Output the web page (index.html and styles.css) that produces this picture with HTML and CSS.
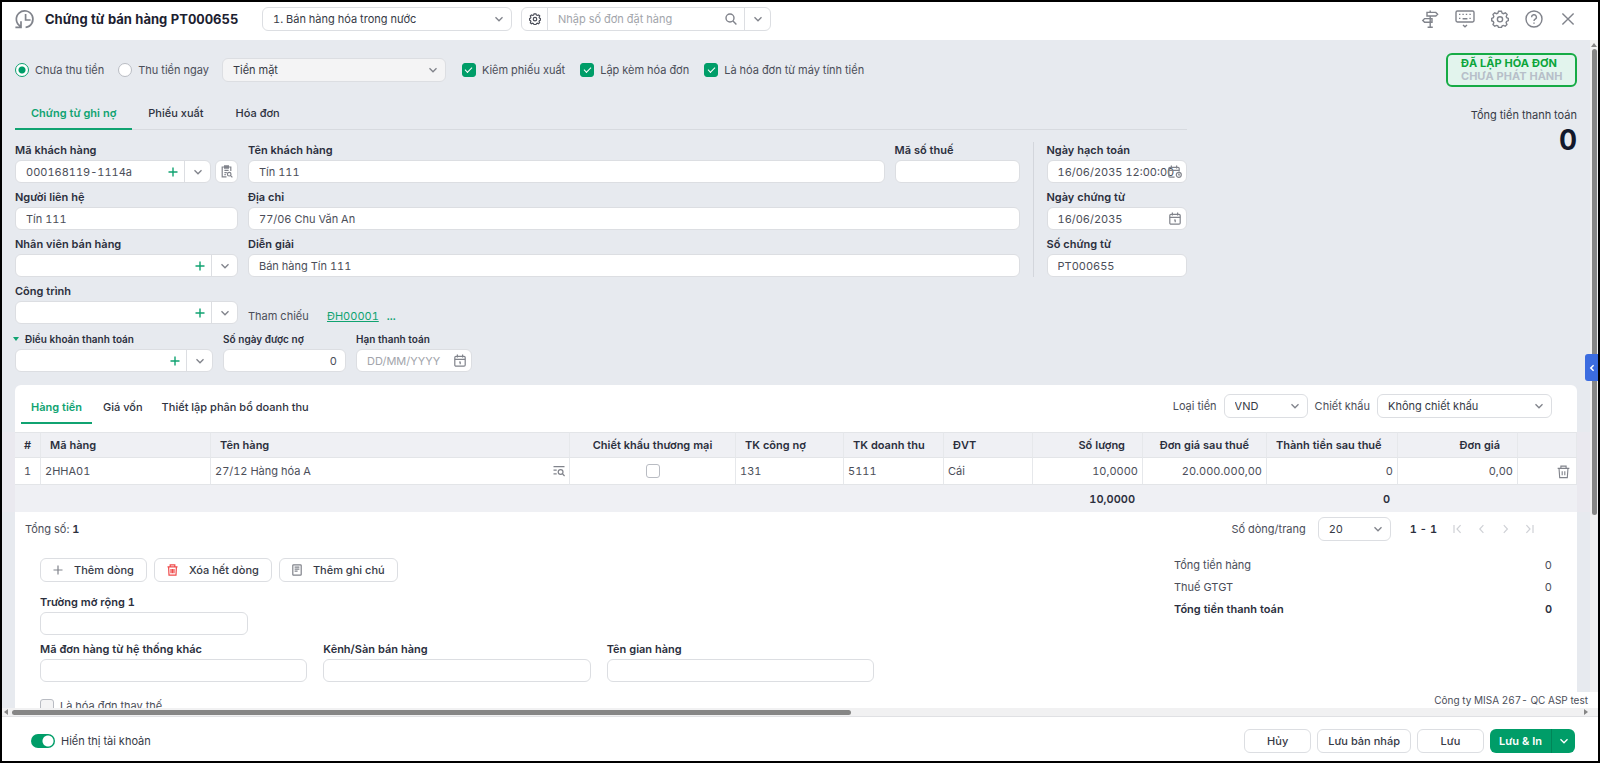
FILE: index.html
```html
<!DOCTYPE html>
<html lang="vi">
<head>
    <meta charset="UTF-8">
    <meta name="viewport" content="width=device-width, initial-scale=1.0">
    <title>Chứng từ bán hàng PT000655</title>
    <link rel="stylesheet" href="styles.css">
</head>
<body>
    <!-- Icon dùng chung -->
    <svg class="sprite" aria-hidden="true">
        <symbol id="i-down" viewBox="0 0 10 10"><path d="M1.5 3.2 5 6.8l3.5-3.6"/></symbol>
        <symbol id="i-plus" viewBox="0 0 10 10"><path d="M5 .5v9M.5 5h9"/></symbol>
        <symbol id="i-gear" viewBox="0 0 18 18"><path d="M7.6 1.2h2.8l.8 2 1.2.5 2-.9 1.7 1.7-.9 2 .5 1.2 1.6.7v2.2l-1.7.8-.5 1.2.8 1.9-1.7 1.7-1.8-.8-1.2.5-.8 1.6H7.6l-.8-1.6-1.2-.5-1.9.8L2 14.6l.8-1.9-.5-1.2-1.6-.8V8.4l1.6-.7.5-1.2-.8-2 1.7-1.7 1.9.9 1.2-.5z"/><circle cx="9" cy="9.3" r="2.6"/></symbol>
        <symbol id="i-cal" viewBox="0 0 12 13"><rect x=".8" y="2.3" width="10.4" height="9.9" rx="1.2"/><path d="M.8 5.3h10.4M3.4.4v3M8.6.4v3M5 8h1.2v2.3"/></symbol>
        <symbol id="i-trash" viewBox="0 0 14 15"><path d="M.7 3.6h12.6M4.2 3.4V1.2h5.6v2.2M2.2 3.8l.7 9.8h8.2l.7-9.8M5.6 6.6v4.4M8.4 6.6v4.4"/></symbol>
    </svg>

    <div class="app">
        <header class="header">
            <svg class="icon history" viewBox="0 0 20 20"><path d="M5.6 17.4a8.3 8.3 0 1 1 5 1M6 12.2V18.4H.4M10.6 5v6h5"/></svg>
            <h1>Chứng từ bán hàng PT000655</h1>
            <div class="select select-type">
                <select aria-label="Loại chứng từ"><option>1. Bán hàng hóa trong nước</option></select>
                <svg class="icon chev"><use href="#i-down"/></svg>
            </div>
            <div class="combo order-search">
                <button class="combo-btn" aria-label="Thiết lập tìm kiếm"><svg class="icon gear-sm"><use href="#i-gear"/></svg></button>
                <input type="text" aria-label="Số đơn đặt hàng" placeholder="Nhập số đơn đặt hàng">
                <svg class="icon lens" viewBox="0 0 12 12"><circle cx="5" cy="5" r="4"/><path d="M8 8l3.4 3.4"/></svg>
                <button class="combo-btn" aria-label="Mở danh sách"><svg class="icon chev-s"><use href="#i-down"/></svg></button>
            </div>
            <div class="header-tools">
                <button aria-label="Hướng dẫn"><svg class="icon tool" viewBox="0 0 18 18"><path d="M9.2.6v1.8M6 2.4h8.8l1.8 1.8L14.8 6H6zM9.2 6v11M11 8.6H3.6L1.8 10.4l1.8 1.8H11zM6.6 17.2h5.2"/></svg></button>
                <button aria-label="Phím tắt"><svg class="icon tool wide" viewBox="0 0 20 18"><rect x="1" y="1" width="18" height="11" rx="1.4"/><path d="M4 4.4h1.4M7.4 4.4h1.4M10.8 4.4h1.4M14.4 4.4h1.4M4 8.4h1.4M7.6 8.8h4.8M14.4 8.4h1.4M8 15l2 1.8 2-1.8"/></svg></button>
                <button aria-label="Thiết lập"><svg class="icon tool"><use href="#i-gear"/></svg></button>
                <button aria-label="Trợ giúp"><svg class="icon tool" viewBox="0 0 18 18"><circle cx="9" cy="9" r="8"/><path d="M6.6 7.2a2.4 2.4 0 1 1 3.6 2c-.8.5-1.2.9-1.2 1.8M9 12.6v1.2"/></svg></button>
                <button aria-label="Đóng"><svg class="icon tool" viewBox="0 0 18 18"><path d="M3.4 3.4l11.2 11.2M14.6 3.4L3.4 14.6"/></svg></button>
            </div>
        </header>

        <div class="workspace">
            <main class="content">
                <section class="top">
                    <div class="form-panel">
                        <div class="options">
                            <label class="radio"><input type="radio" name="pay" checked>Chưa thu tiền</label>
                            <label class="radio"><input type="radio" name="pay">Thu tiền ngay</label>
                            <div class="select select-pay">
                                <select aria-label="Phương thức thanh toán"><option>Tiền mặt</option></select>
                                <svg class="icon chev"><use href="#i-down"/></svg>
                            </div>
                            <label class="check"><input type="checkbox" checked>Kiêm phiếu xuất</label>
                            <label class="check"><input type="checkbox" checked>Lập kèm hóa đơn</label>
                            <label class="check"><input type="checkbox" checked>Là hóa đơn từ máy tính tiền</label>
                        </div>

                        <nav class="tabs">
                            <button class="tab active">Chứng từ ghi nợ</button>
                            <button class="tab">Phiếu xuất</button>
                            <button class="tab">Hóa đơn</button>
                        </nav>

                        <div class="form-body">
                            <div class="fields">
                                <div class="field">
                                    <label for="customerCode">Mã khách hàng</label>
                                    <div class="with-button">
                                        <div class="combo">
                                            <input type="text" id="customerCode" value="000168119-1114a">
                                            <button class="add" aria-label="Thêm khách hàng"><svg class="icon plus"><use href="#i-plus"/></svg></button>
                                            <button class="combo-btn" aria-label="Chọn khách hàng"><svg class="icon chev-s"><use href="#i-down"/></svg></button>
                                        </div>
                                        <button class="square" aria-label="Tra cứu khách hàng"><svg class="icon" width="12" height="13" viewBox="0 0 12 13"><path d="M5.5 11.8H1.2V2h8.6v4M3.6.8h3.8v2.4H3.6zM3.4 5.4h4.2M3.4 7.6h2.4M3.4 9.6h1.4"/><circle cx="8.2" cy="9.2" r="1.8"/><path d="M9.6 10.6l1.8 1.8"/></svg></button>
                                    </div>
                                </div>
                                <div class="field-row">
                                    <div class="field grow">
                                        <label for="customerName">Tên khách hàng</label>
                                        <input class="box" type="text" id="customerName" value="Tín 111">
                                    </div>
                                    <div class="field tax">
                                        <label for="taxCode">Mã số thuế</label>
                                        <input class="box" type="text" id="taxCode">
                                    </div>
                                </div>
                                <div class="field">
                                    <label for="contact">Người liên hệ</label>
                                    <input class="box" type="text" id="contact" value="Tín 111">
                                </div>
                                <div class="field">
                                    <label for="address">Địa chỉ</label>
                                    <input class="box" type="text" id="address" value="77/06 Chu Văn An">
                                </div>
                                <div class="field">
                                    <label for="seller">Nhân viên bán hàng</label>
                                    <div class="combo">
                                        <input type="text" id="seller">
                                        <button class="add" aria-label="Thêm nhân viên"><svg class="icon plus"><use href="#i-plus"/></svg></button>
                                        <button class="combo-btn" aria-label="Chọn nhân viên"><svg class="icon chev-s"><use href="#i-down"/></svg></button>
                                    </div>
                                </div>
                                <div class="field">
                                    <label for="note">Diễn giải</label>
                                    <input class="box" type="text" id="note" value="Bán hàng Tín 111">
                                </div>
                                <div class="field">
                                    <label for="project">Công trình</label>
                                    <div class="combo">
                                        <input type="text" id="project">
                                        <button class="add" aria-label="Thêm công trình"><svg class="icon plus"><use href="#i-plus"/></svg></button>
                                        <button class="combo-btn" aria-label="Chọn công trình"><svg class="icon chev-s"><use href="#i-down"/></svg></button>
                                    </div>
                                </div>
                                <div class="reference">
                                    <span>Tham chiếu</span>
                                    <a class="ref-link" href="#">ĐH00001</a>
                                    <a class="ref-more" href="#">...</a>
                                </div>
                            </div>
                            <div class="dates">
                                <div class="field">
                                    <label for="postDate">Ngày hạch toán</label>
                                    <div class="combo date">
                                        <input type="text" id="postDate" value="16/06/2035 12:00:00">
                                        <svg class="icon cal cal-time" viewBox="0 0 15 13"><path d="M6.6 12.2H2A1.2 1.2 0 0 1 .8 11V3.5A1.2 1.2 0 0 1 2 2.3h8a1.2 1.2 0 0 1 1.2 1.2v3M.8 5.3h10.4M3.4.4v3M8.6.4v3"/><circle cx="10.8" cy="9.8" r="2.5"/><path d="M10.8 8.6v1.4h1.2"/></svg>
                                    </div>
                                </div>
                                <div class="field">
                                    <label for="docDate">Ngày chứng từ</label>
                                    <div class="combo date">
                                        <input type="text" id="docDate" value="16/06/2035">
                                        <svg class="icon cal"><use href="#i-cal"/></svg>
                                    </div>
                                </div>
                                <div class="field">
                                    <label for="docNo">Số chứng từ</label>
                                    <input class="box" type="text" id="docNo" value="PT000655">
                                </div>
                            </div>
                        </div>

                        <div class="terms">
                            <div class="field term-code">
                                <label for="term"><svg class="caret" width="6" height="4" viewBox="0 0 6 4"><path d="M0 0h6L3 4z"/></svg>Điều khoản thanh toán</label>
                                <div class="combo">
                                    <input type="text" id="term">
                                    <button class="add" aria-label="Thêm điều khoản"><svg class="icon plus"><use href="#i-plus"/></svg></button>
                                    <button class="combo-btn" aria-label="Chọn điều khoản"><svg class="icon chev-s"><use href="#i-down"/></svg></button>
                                </div>
                            </div>
                            <div class="field term-days">
                                <label for="days">Số ngày được nợ</label>
                                <input class="box num" type="text" id="days" value="0">
                            </div>
                            <div class="field term-due">
                                <label for="due">Hạn thanh toán</label>
                                <div class="combo date">
                                    <input type="text" id="due" placeholder="DD/MM/YYYY">
                                    <svg class="icon cal"><use href="#i-cal"/></svg>
                                </div>
                            </div>
                        </div>
                    </div>

                    <aside class="status">
                        <div class="badge">
                            <div class="badge-done">ĐÃ LẬP HÓA ĐƠN</div>
                            <div class="badge-wait">CHƯA PHÁT HÀNH</div>
                        </div>
                        <div class="status-label">Tổng tiền thanh toán</div>
                        <div class="status-total">0</div>
                    </aside>
                </section>

                <section class="card">
                    <div class="card-bar">
                        <nav class="card-tabs">
                            <button class="tab active">Hàng tiền</button>
                            <button class="tab">Giá vốn</button>
                            <button class="tab">Thiết lập phân bổ doanh thu</button>
                        </nav>
                        <div class="card-filters">
                            <label for="currency">Loại tiền</label>
                            <div class="select select-currency">
                                <select id="currency"><option>VND</option></select>
                                <svg class="icon chev"><use href="#i-down"/></svg>
                            </div>
                            <label for="discount">Chiết khấu</label>
                            <div class="select select-discount">
                                <select id="discount"><option>Không chiết khấu</option></select>
                                <svg class="icon chev"><use href="#i-down"/></svg>
                            </div>
                        </div>
                    </div>

                    <div class="table-band">
                        <table>
                            <colgroup>
                                <col class="c-idx"><col class="c-code"><col><col class="c-disc"><col class="c-debt"><col class="c-rev"><col class="c-unit"><col class="c-qty"><col class="c-price"><col class="c-amount"><col class="c-base"><col class="c-act">
                            </colgroup>
                            <thead>
                                <tr>
                                    <th class="center">#</th>
                                    <th>Mã hàng</th>
                                    <th>Tên hàng</th>
                                    <th class="center">Chiết khấu thương mại</th>
                                    <th>TK công nợ</th>
                                    <th>TK doanh thu</th>
                                    <th>ĐVT</th>
                                    <th class="right">Số lượng</th>
                                    <th class="right">Đơn giá sau thuế</th>
                                    <th class="right">Thành tiền sau thuế</th>
                                    <th class="right">Đơn giá</th>
                                    <th></th>
                                </tr>
                            </thead>
                            <tbody>
                                <tr>
                                    <td class="center">1</td>
                                    <td>2HHA01</td>
                                    <td>
                                        <div class="name-cell">27/12 Hàng hóa A
                                            <svg class="icon" width="12" height="12" viewBox="0 0 12 12"><path d="M.5 1.6h11M.5 5.2h3.2M.5 8.8h3.2M9.6 9l2 2"/><circle cx="7.6" cy="7" r="2.4"/></svg>
                                        </div>
                                    </td>
                                    <td class="center"><input type="checkbox" aria-label="Chiết khấu thương mại"></td>
                                    <td>131</td>
                                    <td>5111</td>
                                    <td>Cái</td>
                                    <td class="right">10,0000</td>
                                    <td class="right">20.000.000,00</td>
                                    <td class="right">0</td>
                                    <td class="right">0,00</td>
                                    <td class="right"><button class="row-del" aria-label="Xóa dòng"><svg class="icon trash"><use href="#i-trash"/></svg></button></td>
                                </tr>
                            </tbody>
                            <tfoot>
                                <tr>
                                    <td colspan="7"></td>
                                    <td class="right">10,0000</td>
                                    <td></td>
                                    <td class="right">0</td>
                                    <td colspan="2"></td>
                                </tr>
                            </tfoot>
                        </table>
                    </div>

                    <div class="pager">
                        <span>Tổng số: <b>1</b></span>
                        <div class="pager-right">
                            <label for="pageSize">Số dòng/trang</label>
                            <div class="select select-page">
                                <select id="pageSize"><option>20</option></select>
                                <svg class="icon chev"><use href="#i-down"/></svg>
                            </div>
                            <b class="range">1 - 1</b>
                            <button aria-label="Trang đầu"><svg class="icon" width="9" height="10" viewBox="0 0 9 10"><path d="M1 1v8M7.6 1.2L4 5l3.6 3.8"/></svg></button>
                            <button aria-label="Trang trước"><svg class="icon" width="9" height="10" viewBox="0 0 9 10"><path d="M6.4 1.2L2.8 5l3.6 3.8"/></svg></button>
                            <button aria-label="Trang sau"><svg class="icon" width="9" height="10" viewBox="0 0 9 10"><path d="M2.8 1.2L6.4 5 2.8 8.8"/></svg></button>
                            <button aria-label="Trang cuối"><svg class="icon" width="9" height="10" viewBox="0 0 9 10"><path d="M8 1v8M1.4 1.2L5 5 1.4 8.8"/></svg></button>
                        </div>
                    </div>

                    <div class="lower">
                        <div class="lower-left">
                            <div class="actions">
                                <button class="btn"><svg class="icon" width="10" height="10"><use href="#i-plus"/></svg>Thêm dòng</button>
                                <button class="btn"><svg class="icon red" width="11" height="12" viewBox="0 0 11 12"><path d="M.5 2.8h10M3.2 2.6V.8h4.6v1.8M1.6 3l.4 8.2h7L9.4 3M4 5v4.2M5.5 5v4.2M7 5v4.2"/></svg>Xóa hết dòng</button>
                                <button class="btn"><svg class="icon" width="10" height="12" viewBox="0 0 10 12"><rect x=".8" y=".8" width="8.4" height="10.4" rx=".8"/><path d="M2.6 3.2h4.8M2.6 5.2h4.8M2.6 7.2h3"/></svg>Thêm ghi chú</button>
                            </div>
                            <div class="field ext-field">
                                <label for="ext1">Trường mở rộng 1</label>
                                <input class="box" type="text" id="ext1">
                            </div>
                            <div class="ext-row">
                                <div class="field">
                                    <label for="extOrder">Mã đơn hàng từ hệ thống khác</label>
                                    <input class="box" type="text" id="extOrder">
                                </div>
                                <div class="field">
                                    <label for="channel">Kênh/Sàn bán hàng</label>
                                    <input class="box" type="text" id="channel">
                                </div>
                                <div class="field">
                                    <label for="shop">Tên gian hàng</label>
                                    <input class="box" type="text" id="shop">
                                </div>
                            </div>
                            <label class="check replace"><input type="checkbox" disabled>Là hóa đơn thay thế</label>
                        </div>
                        <dl class="totals">
                            <div><dt>Tổng tiền hàng</dt><dd>0</dd></div>
                            <div><dt>Thuế GTGT</dt><dd>0</dd></div>
                            <div class="strong"><dt>Tổng tiền thanh toán</dt><dd>0</dd></div>
                        </dl>
                    </div>
                </section>
            </main>
            <div class="vbar">
                <svg class="arrow" width="6" height="4" viewBox="0 0 6 4"><path d="M0 4h6L3 0z"/></svg>
                <div class="vthumb"></div>
            </div>
            <div class="company">Công ty MISA 267- QC ASP test</div>
            <button class="side-toggle" aria-label="Mở thanh bên"><svg width="6" height="8" viewBox="0 0 6 8"><path d="M4.6 1.2L1.8 4l2.8 2.8"/></svg></button>
        </div>

        <div class="hbar">
            <svg class="arrow" width="4" height="6" viewBox="0 0 4 6"><path d="M4 0v6L0 3z"/></svg>
            <div class="htrack"><div class="hthumb"></div></div>
            <svg class="arrow" width="4" height="6" viewBox="0 0 4 6"><path d="M0 0v6l4-3z"/></svg>
        </div>

        <footer class="footer">
            <label class="toggle"><input type="checkbox" checked>Hiển thị tài khoản</label>
            <div class="footer-actions">
                <button class="btn">Hủy</button>
                <button class="btn">Lưu bản nháp</button>
                <button class="btn">Lưu</button>
                <div class="split">
                    <button class="split-main">Lưu &amp; In</button>
                    <button class="split-more" aria-label="Tùy chọn lưu"><svg class="icon chev-s"><use href="#i-down"/></svg></button>
                </div>
            </div>
        </footer>
    </div>
</body>
</html>
```
FILE: styles.css
```css
* {
    box-sizing: border-box;
}

body {
    margin: 0;
    font-family: Inter, 'Noto Sans', sans-serif;
    font-size: 11px;
    font-variant-numeric: tabular-nums;
    line-height: 16px;
    color: #4b4e59;
}

button,
input,
select {
    font: inherit;
    color: inherit;
    margin: 0;
}

button {
    padding: 0;
    border: none;
    background: none;
    cursor: pointer;
}

.sprite {
    display: none;
}

.icon {
    fill: none;
    stroke: #80838b;
    stroke-width: 1.2;
    flex: none;
}

.plus {
    width: 10px;
    height: 10px;
    stroke: #10a371;
    stroke-width: 1.4;
}

.chev,
.chev-s {
    width: 10px;
    height: 10px;
    stroke-width: 1.3;
}

.app {
    height: 100vh;
    display: flex;
    flex-direction: column;
    border: 2px solid #000;
    background: #fff;
}

/* Header */
.header {
    flex: none;
    height: 38px;
    display: flex;
    align-items: center;
    padding: 0 21px 4px 13px;
}

.history {
    width: 20px;
    height: 20px;
    margin-right: 10px;
    stroke-width: 1.7;
}

h1 {
    margin: 0;
    font-size: 13px;
    font-weight: 700;
    color: #1c2130;
    white-space: nowrap;
    width: 217px;
}

.header-tools {
    margin-left: auto;
    display: flex;
    gap: 16px;
}

.header-tools button {
    display: flex;
}

.tool {
    width: 18px;
    height: 18px;
    stroke-width: 1.4;
}

.tool.wide {
    width: 20px;
}

/* Ô nhập, ô chọn */
.select {
    position: relative;
    flex: none;
}

.select select {
    width: 100%;
    height: 24px;
    display: block;
    appearance: none;
    padding: 0 26px 0 10px;
    border: 1px solid #dcdee2;
    border-radius: 6px;
    background: #fff;
    color: #363a46;
}

.select .chev {
    position: absolute;
    right: 8px;
    top: 7px;
    pointer-events: none;
}

.select-type {
    width: 250px;
    margin-right: 9px;
}

.select-pay {
    width: 224px;
}

.select-pay select {
    background: #f4f4f5;
}

.select-currency {
    width: 84px;
}

.select-discount {
    width: 175px;
}

.select-page {
    width: 73px;
}

.box,
.combo {
    width: 100%;
    height: 23px;
    display: flex;
    align-items: center;
    border: 1px solid #dcdee2;
    border-radius: 6px;
    background: #fff;
}

.box {
    padding: 0 10px;
    outline: none;
}

.combo input {
    flex: 1;
    min-width: 0;
    height: 100%;
    padding: 0 0 0 10px;
    border: none;
    outline: none;
    background: none;
}

input::placeholder {
    color: #a2a5ab;
    opacity: 1;
}

.combo-btn {
    width: 26px;
    height: 100%;
    display: flex;
    align-items: center;
    justify-content: center;
    border-left: 1px solid #dcdee2;
}

.add {
    width: 22px;
    height: 100%;
    display: flex;
    align-items: center;
    justify-content: center;
}

.num {
    text-align: right;
    padding-right: 8px;
}

.date {
    position: relative;
}

.cal {
    position: absolute;
    right: 5px;
    top: 4px;
    width: 12px;
    height: 13px;
}

.cal-time {
    right: 3px;
    width: 15px;
}

.order-search {
    width: 250px;
    height: 24px;
}

.order-search .combo-btn:first-child {
    border-left: none;
    border-right: 1px solid #dcdee2;
}

.gear-sm {
    width: 12px;
    height: 12px;
    stroke: #4b4e59;
    stroke-width: 1.8;
}

.lens {
    width: 12px;
    height: 12px;
    margin-right: 7px;
    stroke-width: 1.4;
}

/* Radio, checkbox */
.radio,
.check,
.toggle {
    display: flex;
    align-items: center;
    white-space: nowrap;
}

input[type="radio"],
input[type="checkbox"] {
    appearance: none;
    width: 14px;
    height: 14px;
    flex: none;
    background: #fff;
    border: 1px solid #b9bcc3;
}

input[type="radio"] {
    border-radius: 50%;
    margin-right: 6px;
}

input[type="radio"]:checked {
    border-color: #10a371;
    background: radial-gradient(circle, #009d68 3px, #fff 4px);
}

input[type="checkbox"] {
    border-radius: 3px;
}

.check input {
    margin-right: 6px;
}

.check input:checked {
    display: grid;
    place-items: center;
    border-color: #009d68;
    background: #009d68;
}

.check input:checked::before {
    content: "";
    width: 6px;
    height: 3px;
    margin-bottom: 2px;
    border-left: 1px solid #fff;
    border-bottom: 1px solid #fff;
    transform: rotate(-45deg);
}

/* Vùng nội dung */
.workspace {
    flex: 1;
    min-height: 0;
    display: flex;
    position: relative;
}

.content {
    flex: 1;
    min-width: 0;
    overflow: hidden;
    padding: 0 13px;
    background: #e7eaef;
}

.top {
    display: flex;
    justify-content: space-between;
}

.form-panel {
    width: 75%;
    padding-top: 18px;
}

.options {
    display: flex;
    align-items: center;
}

.options .radio {
    margin-right: 14px;
}

.select-pay {
    margin-left: -1px;
    margin-right: 16px;
}

.options .check {
    margin-right: 15px;
}

.tabs {
    display: flex;
    height: 34px;
    margin-top: 14px;
    border-bottom: 1px solid #d7dadf;
}

.tab {
    height: 34px;
    padding: 2px 16px 0;
    border-bottom: 2px solid transparent;
    font-weight: 500;
    color: #2e3240;
    white-space: nowrap;
}

.tab.active {
    color: #10a371;
    border-bottom-color: #10a371;
    font-weight: 600;
}

.form-body {
    display: flex;
    margin-top: 12px;
}

.fields {
    flex: 1;
    display: grid;
    grid-template-columns: 223px 1fr;
    column-gap: 10px;
    row-gap: 6px;
}

.field {
    display: flex;
    flex-direction: column;
    gap: 2px;
    min-width: 0;
}

.field label {
    font-weight: 600;
    color: #2b2f3d;
    white-space: nowrap;
}

.field-row {
    display: flex;
    gap: 10px;
}

.grow {
    flex: 1;
}

.tax {
    width: 125px;
}

.with-button {
    display: flex;
    gap: 4px;
}

.with-button .combo {
    flex: 1;
    min-width: 0;
}

.square {
    width: 23px;
    height: 23px;
    flex: none;
    display: flex;
    align-items: center;
    justify-content: center;
    border: 1px solid #dcdee2;
    border-radius: 6px;
    background: #fff;
}

.reference {
    display: flex;
    align-items: flex-end;
}

.reference span {
    width: 79px;
}

.reference a {
    color: #10a371;
}

.ref-more {
    margin-left: 8px;
    text-decoration: none;
    font-weight: 600;
}

.dates {
    align-self: flex-start;
    width: 154px;
    margin-left: 13px;
    padding-left: 13px;
    border-left: 1px solid #d3d6dc;
    display: flex;
    flex-direction: column;
    gap: 6px;
}

.terms {
    display: flex;
    gap: 10px;
    margin-top: 7px;
}

.terms label {
    font-size: 10px;
}

.term-code {
    width: 198px;
}

.caret {
    margin: 0 6px 2px -2px;
    fill: #10a371;
}

.term-days {
    width: 123px;
}

.term-due {
    width: 116px;
}

.status {
    padding-top: 13px;
    text-align: right;
    color: #363a46;
}

.badge {
    width: 131px;
    padding: 2px 0 2px 13px;
    border: 2px solid #16ab45;
    border-radius: 6px;
    background: #e2f4ed;
    text-align: left;
    font-weight: 700;
    line-height: 13px;
    white-space: nowrap;
}

.badge-done {
    color: #0ba53b;
}

.badge-wait {
    color: #b7bfc9;
}

.status-label {
    margin-top: 20px;
}

.status-total {
    font-size: 28px;
    line-height: 34px;
    font-weight: 700;
    color: #12182b;
}

/* Bảng hàng tiền */
.card {
    margin-top: 13px;
    background: #fff;
    border-radius: 6px 6px 0 0;
}

.card-bar {
    height: 47px;
    display: flex;
    justify-content: space-between;
    padding: 5px 25px 0 6px;
}

.card-tabs .tab {
    padding: 1px 8px 0;
}

.card-tabs .tab:first-child {
    padding: 1px 10px 0;
}

.card-filters {
    display: flex;
    align-items: center;
    height: 31px;
    gap: 7px;
}

.table-band {
    margin: 0 -13px;
    padding: 0 13px;
    background: #eae9ef;
}

table {
    width: 100%;
    table-layout: fixed;
    border-collapse: separate;
    border-spacing: 0;
    background: #fff;
}

.c-idx { width: 26px; }
.c-code { width: 170px; }
.c-disc { width: 166px; }
.c-debt { width: 108px; }
.c-rev { width: 100px; }
.c-unit { width: 89px; }
.c-qty { width: 110px; }
.c-price { width: 124px; }
.c-amount { width: 131px; }
.c-base { width: 120px; }
.c-act { width: 59px; }

th,
td {
    height: 27px;
    padding: 0 4px;
    text-align: left;
    white-space: nowrap;
    border-right: 1px solid #e6e8eb;
    border-bottom: 1px solid #e3e5e8;
}

th {
    height: 26px;
    padding: 0 9px;
    font-weight: 600;
    color: #2b2f3d;
    background: #eff0f4;
    border-top: 1px solid #e3e5e8;
}

th.right {
    padding-right: 17px;
}

.center {
    text-align: center;
}

.right {
    text-align: right;
}

th.center:first-child,
td.center:first-child {
    padding: 0;
}

td input[type="checkbox"] {
    display: block;
    margin: 0 auto;
}

tfoot td {
    padding-right: 8px;
    border: none;
    background: #eff0f4;
    font-weight: 600;
    color: #2b2f3d;
}

.name-cell {
    display: flex;
    align-items: center;
    justify-content: space-between;
}

.row-del {
    display: inline-flex;
    padding-right: 2px;
    vertical-align: middle;
}

.trash {
    width: 13px;
    height: 14px;
}

.pager {
    height: 34px;
    display: flex;
    align-items: center;
    justify-content: space-between;
    padding: 0 43px 0 10px;
}

.pager b {
    font-weight: 600;
    color: #2b2f3d;
}

.pager-right {
    display: flex;
    align-items: center;
}

.pager-right .select {
    margin: 0 19px 0 12px;
}

.range {
    margin-right: 1px;
}

.pager-right button {
    display: flex;
    margin-left: 15px;
}

.pager-right .icon {
    stroke: #cfd1d6;
}

.pager-right .chev {
    stroke: #80838b;
}

.lower {
    display: flex;
    justify-content: space-between;
    padding: 0 25px;
}

.lower-left {
    flex: 1;
    max-width: 834px;
    padding-top: 12px;
}

.actions {
    display: flex;
    gap: 7px;
}

.btn {
    height: 24px;
    display: flex;
    align-items: center;
    justify-content: center;
    gap: 10px;
    padding: 0 12px;
    border: 1px solid #dcdee2;
    border-radius: 6px;
    background: #fff;
    color: #363a46;
    font-weight: 500;
    white-space: nowrap;
}

.actions .btn {
    gap: 11px;
}

.red {
    stroke: #ef4b4b;
}

.ext-field {
    width: 208px;
    margin-top: 12px;
}

.ext-row {
    display: grid;
    grid-template-columns: 1fr 1fr 1fr;
    gap: 16px;
    margin-top: 6px;
}

.replace {
    margin-top: 16px;
}

.replace input {
    background: #f4f4f5;
}

.totals {
    width: 378px;
    margin: 0;
    padding-top: 8px;
    line-height: 22px;
}

.totals div {
    display: flex;
    justify-content: space-between;
}

.totals dd {
    margin: 0;
}

.strong {
    font-weight: 600;
    color: #2b2f3d;
}

/* Thanh cuộn */
.vbar {
    width: 8px;
    display: flex;
    flex-direction: column;
    align-items: center;
    padding-top: 3px;
    background: #f1f1f2;
}

.arrow {
    flex: none;
    fill: #868686;
}

.vthumb {
    width: 5px;
    height: 70%;
    margin-top: 2px;
    border-radius: 3px;
    background: #868686;
}

.hbar {
    flex: none;
    height: 9px;
    display: flex;
    align-items: center;
    padding: 0 10px 0 2px;
    background: #f1f1f2;
    border-bottom: 1px solid #e0e1e4;
}

.htrack {
    flex: 1;
    margin: 0 4px;
}

.hthumb {
    width: 53.5%;
    height: 5px;
    border-radius: 3px;
    background: #868686;
}

.company {
    position: absolute;
    right: 0;
    bottom: 0;
    padding: 0 10px 0 8px;
    background: #fff;
    font-size: 10px;
    white-space: nowrap;
}

.side-toggle {
    position: absolute;
    right: 0;
    top: 314px;
    width: 13px;
    height: 27px;
    display: flex;
    align-items: center;
    justify-content: center;
    border-radius: 3px 0 0 3px;
    background: #3b6ce0;
}

.side-toggle svg {
    fill: none;
    stroke: #fff;
    stroke-width: 1.5;
}

/* Footer */
.footer {
    flex: none;
    height: 44px;
    display: flex;
    align-items: center;
    justify-content: space-between;
    padding: 3px 23px 0 29px;
}

.toggle {
    color: #363a46;
}

.toggle input[type="checkbox"] {
    width: 24px;
    height: 14px;
    margin-right: 6px;
    border: none;
    border-radius: 7px;
    background: radial-gradient(circle at 17px 7px, #fff 5px, #009d68 6px);
}

.footer-actions {
    display: flex;
    gap: 6px;
}

.footer-actions .btn {
    min-width: 67px;
    padding: 0 10px;
}

.split {
    height: 24px;
    display: flex;
    border-radius: 6px;
    overflow: hidden;
    background: #009d68;
    color: #fff;
}

.split-main {
    padding: 0 9px;
    font-weight: 600;
}

.split-more {
    width: 24px;
    display: flex;
    align-items: center;
    justify-content: center;
    border-left: 1px solid #018558;
}

.split .icon {
    stroke: #fff;
}
```
